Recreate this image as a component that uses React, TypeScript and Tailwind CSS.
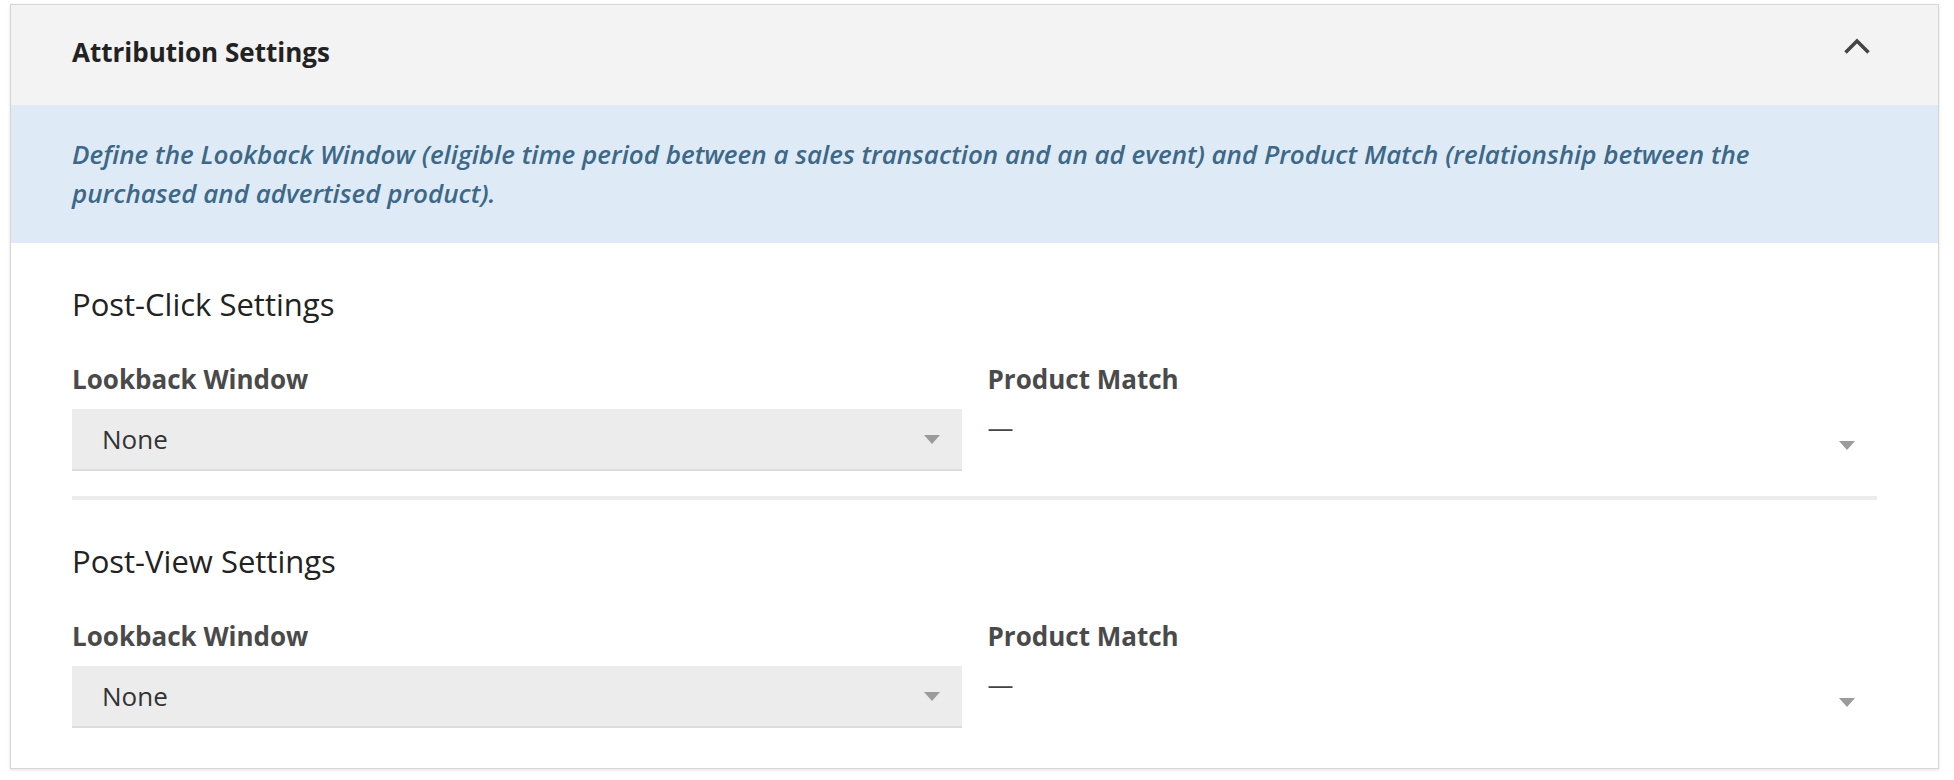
import React from 'react';

/* Attribution settings card — collapsible header, info banner, two setting groups */

const Caret: React.FC = () => (
  <svg width="16" height="9" viewBox="0 0 16 9" className="shrink-0">
    <polygon points="0,0 16,0 8,9" fill="#9b9b9b" />
  </svg>
);

const SettingGroup: React.FC<{ title: string; divider?: boolean }> = ({ title, divider }) => (
  <div className={divider ? 'pb-[25px] border-b-4 border-[#ececec]' : ''}>
    <h3 className="text-[31px] leading-[42px] text-[#222] font-normal">{title}</h3>
    <div className="grid grid-cols-2 gap-[26px] mt-[36px]">
      {/* Lookback Window */}
      <div>
        <p className="text-[26px] leading-[36px] font-bold text-[#4a4a4a]">Lookback Window</p>
        <div className="mt-[12px] h-[62px] bg-[#ececec] border-b-2 border-[#dcdcdc] flex items-center justify-between pl-[30px] pr-[22px]">
          <span className="text-[26px] text-[#333]">None</span>
          <Caret />
        </div>
      </div>

      {/* Product Match */}
      <div>
        <p className="text-[26px] leading-[36px] font-bold text-[#4a4a4a]">Product Match</p>
        <div className="mt-[12px] h-[62px] flex justify-between pr-[22px]">
          <span className="text-[26px] leading-[36px] text-[#444]">—</span>
          <div className="pt-[32px]">
            <Caret />
          </div>
        </div>
      </div>
    </div>
  </div>
);

export default function App() {
  return (
    <div
      className="w-[1954px] h-[780px] bg-white pl-[10px] pr-[15px] pt-[4px]"
      style={{ fontFamily: '"Open Sans", "Liberation Sans", sans-serif' }}
    >
      <div className="border border-[#d6d6d6] shadow-[0_1px_3px_rgba(0,0,0,0.12)] bg-white">
        {/* ── Header ── */}
        <div className="h-[100px] bg-[#f3f3f3] flex items-center justify-between pl-[61px] pr-[68px]">
          <h2 className="text-[26px] font-bold text-[#222] -translate-y-[3px]">Attribution Settings</h2>
          <svg
            width="26"
            height="16"
            viewBox="0 0 26 16"
            fill="none"
            stroke="#444"
            strokeWidth="3.5"
            className="-translate-y-[9px]"
          >
            <polyline points="1.5,14.5 13,3 24.5,14.5" />
          </svg>
        </div>

        {/* ── Info banner ── */}
        <div className="bg-[#deebf6] px-[61px] py-[30px]">
          <p className="max-w-[1730px] text-[26px] leading-[39px] italic text-[#3d6888] font-semibold">
            Define the Lookback Window (eligible time period between a sales transaction and an ad event) and Product Match
            (relationship between the purchased and advertised product).
          </p>
        </div>

        {/* ── Settings ── */}
        <div className="px-[61px] pt-[40px] pb-[40px] flex flex-col gap-[40px]">
          <SettingGroup title="Post-Click Settings" divider />
          <SettingGroup title="Post-View Settings" />
        </div>
      </div>
    </div>
  );
}
